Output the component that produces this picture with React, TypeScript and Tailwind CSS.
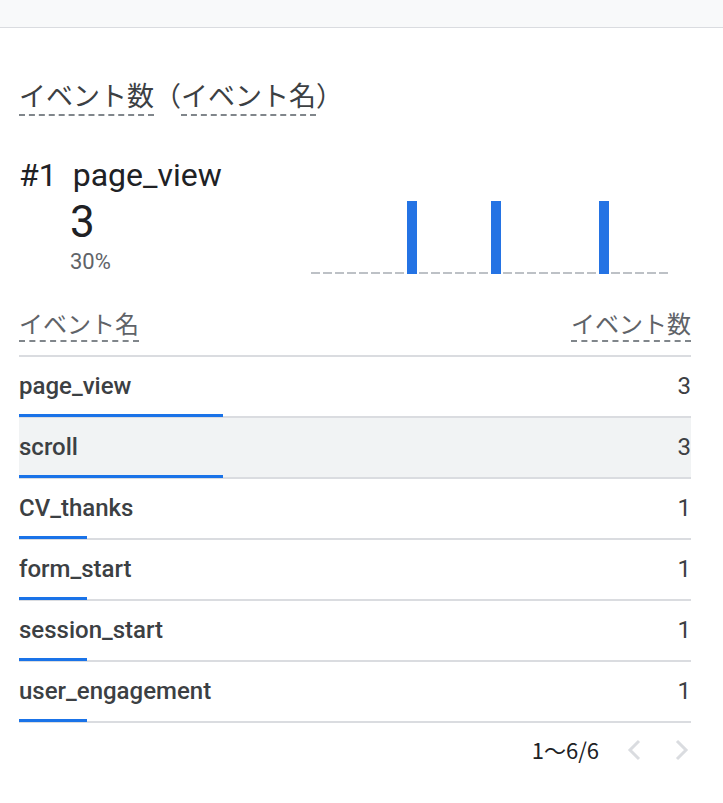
import React from 'react';

const rows = [
  { name: 'page_view', count: 3, hl: false },
  { name: 'scroll', count: 3, hl: true },
  { name: 'CV_thanks', count: 1, hl: false },
  { name: 'form_start', count: 1, hl: false },
  { name: 'session_start', count: 1, hl: false },
  { name: 'user_engagement', count: 1, hl: false },
];

const font = { fontFamily: '"Noto Sans CJK JP", Roboto, "Liberation Sans", sans-serif' };

const Chart: React.FC = () => (
  <svg width="360" height="75" viewBox="0 0 360 75">
    <line x1="0" y1="72" x2="358" y2="72" stroke="#bdc1c6" strokeWidth="2" strokeDasharray="9 3" />
    {[96, 180, 288].map((x) => (
      <rect key={x} x={x} y="0" width="10" height="73" fill="#2473e4" />
    ))}
  </svg>
);

const App: React.FC = () => {
  return (
    <div className="w-[723px] h-[803px] bg-white text-[#202124]" style={font}>
      <div className="h-[28px] bg-[#f8f9fa] border-b border-[#dadce0]" />
      <div className="px-[19px] pt-[48px]">
        <div className="flex text-[27px] leading-[38px] text-[#3c4043]">
          <span className="border-b-2 border-dashed border-[#80868b]">イベント数</span>
          <span>（</span>
          <span className="border-b-2 border-dashed border-[#80868b]">イベント名</span>
          <span>）</span>
        </div>
        <div className="mt-[40px] text-[32px] leading-[38px] flex gap-[16px]" style={{ fontFamily: 'Roboto, sans-serif' }}>
          <span>#1</span><span>page_view</span>
        </div>
        <div className="flex">
          <div className="pl-[51px] w-[292px]" style={{ fontFamily: 'Roboto, sans-serif' }}>
            <div className="text-[44px] leading-[52px] mt-[2px]">3</div>
            <div className="text-[22px] text-[#5f6368] leading-[28px]">30%</div>
          </div>
          <div className="mt-[7px]"><Chart /></div>
        </div>
        <div className="mt-[30px] flex justify-between text-[24px] text-[#5f6368] leading-[34px] w-[672px]">
          <span className="border-b-2 border-dashed border-[#80868b]">イベント名</span>
          <span className="border-b-2 border-dashed border-[#80868b]">イベント数</span>
        </div>
        <div className="mt-[13px] w-[672px] border-t-2 border-[#dadce0]" style={{ fontFamily: 'Roboto, sans-serif' }}>
          {rows.map((r) => (
            <div key={r.name} className={`h-[61px] border-b-2 border-[#dadce0] relative ${r.hl ? 'bg-[#f1f3f4]' : ''}`}>
              <div className="flex justify-between pt-[14px] text-[24px] leading-[30px]">
                <span className="font-medium text-[#3c4043]">{r.name}</span>
                <span className="text-[#3c4043]">{r.count}</span>
              </div>
              <div
                className="absolute left-0 bottom-[-1px] h-[3px] bg-[#1a73e8]"
                style={{ width: r.count === 3 ? 204 : 68 }}
              />
            </div>
          ))}
        </div>
        <div className="mt-[10px] w-[672px] flex justify-end items-center gap-[26px] text-[22px]" style={font}>
          <span>1～6/6</span>
          <svg width="20" height="24" viewBox="0 0 20 24"><path d="M14 3 L5 12 L14 21" stroke="#dadce0" strokeWidth="3" fill="none" /></svg>
          <svg width="20" height="24" viewBox="0 0 20 24"><path d="M6 3 L15 12 L6 21" stroke="#dadce0" strokeWidth="3" fill="none" /></svg>
        </div>
      </div>
    </div>
  );
};

export default App;
